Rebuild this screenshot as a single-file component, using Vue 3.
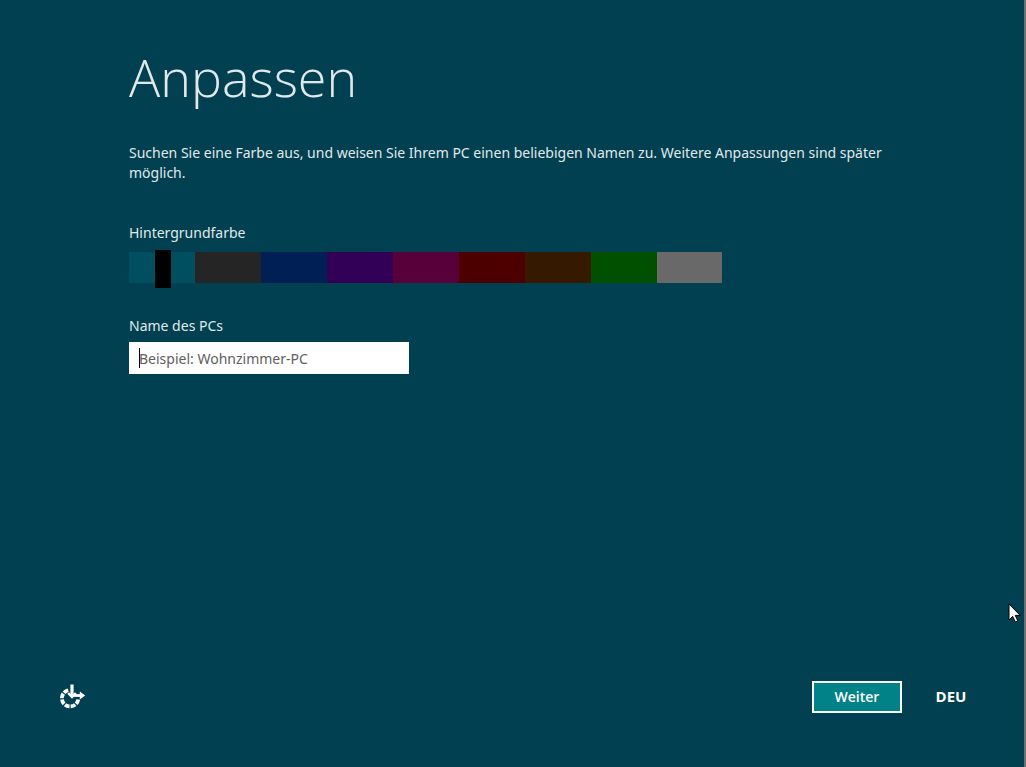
<script setup>
import { ref } from 'vue'

const colors = ['#004f60', '#252525', '#001f55', '#320057', '#570039', '#4c0000', '#351a00', '#005000', '#696969']
const selected = ref(0)
const pcName = ref('')
</script>

<template>
  <div class="screen">
    <main class="content">
      <h1>Anpassen</h1>
      <p class="intro">Suchen Sie eine Farbe aus, und weisen Sie Ihrem PC einen beliebigen Namen zu. Weitere Anpassungen sind später möglich.</p>
      <label class="label" for="color">Hintergrundfarbe</label>
      <div class="picker">
        <div class="swatches">
          <span v-for="c in colors" :key="c" class="swatch" :style="{ background: c }"></span>
        </div>
        <input id="color" v-model="selected" class="slider" type="range" min="0" max="8">
      </div>
      <label class="label" for="pc">Name des PCs</label>
      <div class="field">
        <input id="pc" v-model="pcName" class="name" type="text" placeholder="Beispiel: Wohnzimmer-PC">
        <span class="caret"></span>
      </div>
    </main>
    <footer class="footer">
      <button class="access" type="button" aria-label="Erleichterte Bedienung">
        <svg width="28" height="26" viewBox="0 0 28 26" fill="none" stroke="#fff">
          <path d="M19.2 15.4A8.2 8.2 0 1 1 9.4 6.2" stroke-width="3.8" stroke-dasharray="4.9 1.2" />
          <path d="M13 0.5V12" stroke-width="3.2" />
          <path d="M9.2 9L13 13L16.8 9" stroke-width="2.4" />
          <path d="M13 11.5H24" stroke-width="2.8" />
          <path d="M20.8 7.4V15.6L26.2 11.5Z" fill="#fff" stroke="none" />
        </svg>
      </button>
      <button class="next" type="button">Weiter</button>
      <button class="lang" type="button">DEU</button>
    </footer>
    <svg class="pointer" width="13" height="20" viewBox="0 0 13 20">
      <path d="M1 1V17L4.7 13.4L7.3 19L9.8 17.9L7.3 12.4H12.2Z" fill="#fff" stroke="#000" stroke-width="1" />
    </svg>
  </div>
</template>

<style>
body {
  background: #004050;
}
</style>

<style scoped>
.screen {
  position: relative;
  box-sizing: border-box;
  min-height: 100vh;
  display: flex;
  flex-direction: column;
  background: #004050;
  border-right: 2px solid #707070;
  color: #e0e8ea;
  font-family: "Segoe UI", "Noto Sans", "Open Sans", sans-serif;
  font-size: 14px;
  line-height: 20px;
}
.content {
  flex: 1;
  padding: 40px 129px 0;
}
h1 {
  margin: 0;
  font-family: "Segoe UI Light", "Open Sans", sans-serif;
  font-size: 52px;
  line-height: 74px;
  font-weight: 300;
}
.intro {
  margin: 29px 0 40px;
}
.label {
  display: block;
}
.picker {
  display: grid;
  align-items: center;
  max-width: 593px;
  height: 38px;
  margin: 7px 0 28px;
}
.swatches,
.slider {
  grid-area: 1 / 1;
}
.swatches {
  display: flex;
  align-self: start;
  height: 31px;
  margin-top: 2px;
}
.swatch {
  flex: 0 1 66px;
}
.swatch:last-child {
  flex-basis: 65px;
}
.slider {
  appearance: none;
  box-sizing: border-box;
  width: 100%;
  height: 38px;
  margin: 0;
  padding: 0 26px;
  background: transparent;
}
.slider::-webkit-slider-thumb {
  appearance: none;
  width: 16px;
  height: 38px;
  background: #000;
  border: 0;
}
.field {
  position: relative;
  max-width: 280px;
  margin-top: 6px;
}
.name {
  display: block;
  box-sizing: border-box;
  width: 100%;
  height: 32px;
  padding: 0 10px;
  border: 0;
  background: #fff;
  color: #000;
  font: inherit;
}
.name::placeholder {
  color: #606060;
  opacity: 1;
}
.caret {
  position: absolute;
  left: 10px;
  top: 6px;
  width: 1px;
  height: 20px;
  background: #000;
}
.footer {
  display: flex;
  align-items: center;
  padding: 0 57px 54px 59px;
}
button {
  border: 0;
  background: none;
  color: #fff;
  font: inherit;
  font-family: "Segoe UI", "Open Sans", sans-serif;
  font-weight: 700;
}
.access {
  padding: 0;
  line-height: 0;
}
.next {
  width: 90px;
  height: 32px;
  margin-left: auto;
  margin-right: 33px;
  border: 2px solid #fff;
  background: #008287;
  font-weight: 600;
}
.lang {
  min-width: 32px;
  padding: 0 0 2px;
  font-size: 15px;
}
.pointer {
  position: absolute;
  right: 3px;
  top: 603px;
}
</style>
